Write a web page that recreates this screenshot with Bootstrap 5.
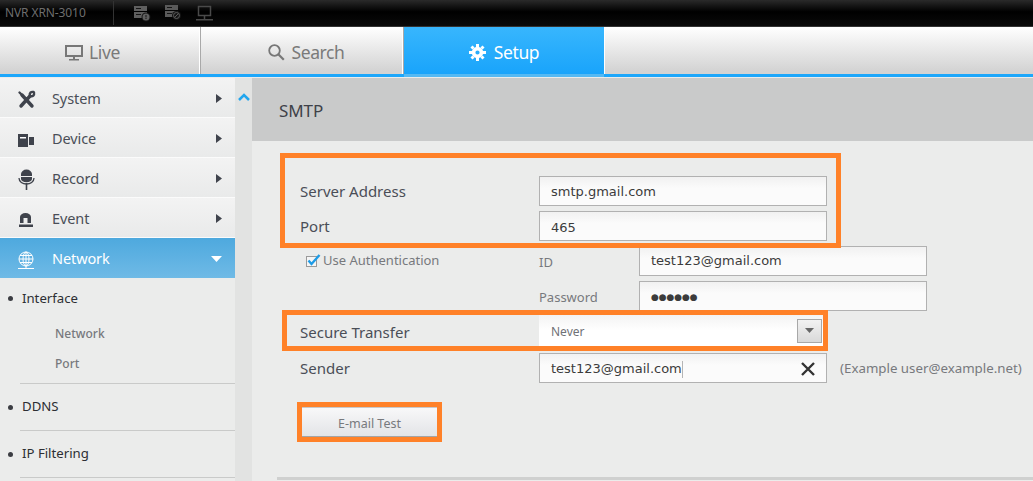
<!DOCTYPE html>
<html lang="en">
<head>
<meta charset="utf-8">
<title>SMTP</title>
<link rel="stylesheet" href="https://cdn.jsdelivr.net/npm/bootstrap@5.3.0/dist/css/bootstrap.min.css">
<style>
html,body{height:100%;overflow:hidden}
body{background:#ebeceb;font-family:"Noto Sans","Open Sans","Liberation Sans",sans-serif;color:#4a4e57}
.topbar{height:27px;background:linear-gradient(#2a2a2a,#000 45%,#0a0a0a);border-bottom:1px solid #333}
.model{width:114px;padding-left:5px;font-size:12px;letter-spacing:-.1px;color:#6e6e6e;line-height:24px;border-right:1px solid #333;height:24px;white-space:nowrap}
.topico{margin-left:20px;gap:14px}
.tabbar{height:50px;background:linear-gradient(#fff,#f8f8f8 15%,#d3d3d3 94%);border-bottom:3px solid #1da7fb}
.tabx{color:#7a7a7a;font-size:17.5px;letter-spacing:-.4px;gap:8px;border-right:1px solid #a9a9a9;box-shadow:inset -1px 0 0 #fff;height:47px;padding-top:4px}
.tlive{width:201px;padding-right:15px;gap:6px}
.tsearch{width:203px;padding-left:8px;gap:7px}
.tsetup{width:201px}
.tabx.act{color:#fff;background:linear-gradient(#38b6fd,#19a4fb);border-right:1px solid #fff;box-shadow:none;position:relative}
.tabx.act::after{content:"";position:absolute;left:0;right:0;bottom:-3px;height:3px;background:#55b9f3}
.mainwrap{margin-top:1px;height:403px}
.sidenav{width:235px;background:#ebeceb}
.mrow{height:40px;padding:2px 13px 0 18px;background:linear-gradient(#f3f3f3,#e9eaea);border-bottom:1px solid #fbfbfb;font-size:14.5px;letter-spacing:-.1px;color:#4a4e57}
.mrow.on{background:linear-gradient(#4ea9de,#6fbae6);color:#fff;border-bottom:0}
.mico{width:18px;height:18px;margin-right:16px;overflow:visible;flex-shrink:0}
.subhead{font-size:13.2px;color:#2d2f33;padding-left:22px;position:relative;height:46px;line-height:45px}
.subhead.firsth{height:40px;line-height:41px}
.subhead::before{content:"";position:absolute;left:8px;top:50%;margin-top:-2.5px;width:5px;height:5px;border-radius:50%;background:#3b3d42}
.subitem{font-size:12px;font-weight:500;color:#77797d;padding-left:55px;height:30px;line-height:32px}
.divl{height:1px;background:#c9cac9;margin-left:20px}
.subend{margin-top:5px}
.scroller{width:17px;background:#e2e3e2;padding-top:15px}
.panel{position:relative}
.panelhead{height:63px;background:#c9caca;padding:2px 0 0 27px;font-size:17px;letter-spacing:-.1px;color:#3e4148}
.fbody{padding:35px 0 0 48px}
.frow{height:30px;margin-bottom:5px}
.flabel{width:239px;font-size:15px;padding-top:0;color:#4a4e57}
.txtin{width:288px;height:30px;border:1px solid #b1b1b1;background:linear-gradient(#f1f1f1,#fbfbfb 40%);font-family:"DejaVu Sans",sans-serif;font-size:13px;color:#3c3c3c;padding:2px 11px 0}
.txtin.flat{padding-top:0}
.txtin.low{padding-top:3px}
.dots{font-size:9px;letter-spacing:-.1px;padding-top:1px}
.slabel{width:100px;font-size:13px;color:#77797d;padding-top:3px}
.authl{width:239px;font-size:13px;color:#77797d;padding:0 0 1px 6px;gap:1px}
.secrow{height:31px;margin-top:-1px;margin-bottom:7px}
.secrow .flabel{padding-top:4px}
.selbox{width:288px;height:31px;background:linear-gradient(#f3f3f3,#fff 50%);padding:0 5px 0 12px;font-size:12px;color:#6f7176}
.seltext{padding-top:3px}
.selbtn{width:25px;height:24px;border:1px solid #a8a8a8;background:linear-gradient(#f2f2f2,#d9d9d9)}
.hint{font-size:13.3px;color:#77797d;margin-left:13px;white-space:nowrap;padding-top:1px}
.caretbar{width:1px;height:17px;background:#b5b5b5}
.testbtn{display:block;width:135px;height:30px;border:0;border-bottom:1px solid #a3a4a6;border-top:1px solid #c8c8c8;border-radius:0;background:linear-gradient(#f8f8f9,#e3e4e7);font-size:12.5px;color:#77797d;margin:24px 0 0 2px;padding:5px 0 0}
.bline{position:absolute;left:25px;right:0;top:399px;height:3px;background:#cfd0cf}
.mark-o{position:absolute;border:5px solid #ff8128;pointer-events:none}
.m1{left:28px;top:75px;width:561px;height:95px}
.m2{left:30px;top:232px;width:546px;height:41px}
.m3{left:45px;top:324px;width:145px;height:40px}
</style>
</head>
<body>
<div class="topbar d-flex align-items-center">
  <div class="model">NVR XRN-3010</div>
  <div class="topico d-flex align-items-center">
    <svg width="17" height="17" viewBox="0 0 17 17"><path fill="#5f5f5f" d="M0 1h13v5H0zM0 7h13v6H0z"/><path fill="#151515" d="M2 3h5v1H2zM2 9h5v1H2z"/><circle cx="12" cy="12" r="4.500" fill="#151515"/><circle cx="12" cy="12" r="3.500" fill="#5f5f5f"/><path fill="#151515" d="M11.500 10h1v2.500h-1zM11.500 13h1v1h-1z"/></svg>
    <svg width="17" height="17" viewBox="0 0 17 17"><path fill="#5a5a5a" d="M0 0h13v5H0zM0 6h13v6H0z"/><path fill="#151515" d="M2 2h5v1H2zM2 8h5v1H2z"/><circle cx="11.500" cy="10.500" r="4.500" fill="#151515"/><circle cx="11.500" cy="10.500" r="3" fill="none" stroke="#5a5a5a"/><path stroke="#5a5a5a" d="M9.500 12.500l4-4"/></svg>
    <svg width="17" height="17" viewBox="0 0 17 17"><path fill="none" stroke="#4a4a4a" stroke-width="1.500" d="M2.500 1.500h12v9h-12zM8.500 11v3"/><path fill="#4a4a4a" d="M0 14h17v1.500H0z"/></svg>
  </div>
</div>
<div class="tabbar d-flex">
  <div class="tabx tlive d-flex align-items-center justify-content-center"><svg width="18" height="16" viewBox="0 0 18 16"><path fill="none" stroke="#777" stroke-width="2" d="M1 1h16v10H1z"/><path fill="#777" d="M8 12h2v2H8zM4 14h10v1.500H4z"/></svg>Live</div>
  <div class="tabx tsearch d-flex align-items-center justify-content-center"><svg width="17" height="17" viewBox="0 0 17 17"><circle cx="6.500" cy="6.500" r="5.300" fill="none" stroke="#777" stroke-width="1.800"/><path stroke="#777" stroke-width="2.200" d="M10.300 10.300l5.500 5.500"/></svg>Search</div>
  <div class="tabx tsetup act d-flex align-items-center justify-content-center"><svg width="17" height="17" viewBox="0 0 17 17"><circle cx="8.500" cy="8.500" r="3.900" fill="none" stroke="#fff" stroke-width="3.600"/><g stroke="#fff" stroke-width="3"><path d="M8.500 0v3M8.500 14v3M0 8.500h3M14 8.500h3M2.500 2.500l2 2M12.500 12.500l2 2M14.500 2.500l-2 2M4.500 12.500l-2 2"/></g></svg>Setup</div>
</div>
<div class="mainwrap d-flex">
  <nav class="sidenav flex-shrink-0">
    <div class="mrow d-flex align-items-center">
      <svg class="mico" viewBox="0 0 18 18"><g fill="none" stroke="#3f434c" stroke-linecap="round"><path stroke-width="3.400" d="M3 16L12 6M4 5l10 11"/><path stroke-width="2.400" d="M1.500 2.500L4 5M12 6c-1-3 1-4.500 3.500-4M12 6c3 1 4.500-1 4-3.500"/></g></svg>
      <span class="flex-grow-1">System</span>
      <svg width="6" height="9" viewBox="0 0 6 9"><path fill="#3f434c" d="M0 0l6 4.500L0 9z"/></svg>
    </div>
    <div class="mrow d-flex align-items-center">
      <svg class="mico" viewBox="0 0 18 18"><path fill="#3f434c" d="M0 4h10v13H0zM11 7h5v8h-5z"/><path fill="#fff" d="M2 7h6v1.500H2z"/></svg>
      <span class="flex-grow-1">Device</span>
      <svg width="6" height="9" viewBox="0 0 6 9"><path fill="#3f434c" d="M0 0l6 4.500L0 9z"/></svg>
    </div>
    <div class="mrow d-flex align-items-center">
      <svg class="mico" viewBox="0 0 18 18"><path fill="#3f434c" d="M3 4a5 4 0 0 1 11 0v2H3zM3 7h11v2a5 3 0 0 1-11 0z"/><path fill="none" stroke="#3f434c" stroke-width="1.300" d="M1 8c0 8 15 8 15 0"/><path stroke="#3f434c" stroke-width="1.600" d="M8.500 13v7"/></svg>
      <span class="flex-grow-1">Record</span>
      <svg width="6" height="9" viewBox="0 0 6 9"><path fill="#3f434c" d="M0 0l6 4.500L0 9z"/></svg>
    </div>
    <div class="mrow d-flex align-items-center">
      <svg class="mico" viewBox="0 0 18 18"><path fill="#3f434c" d="M2 13V7a5.500 4 0 0 1 11 0v6H9.500V8h-4v5zM1 14.500h14V17H1z"/></svg>
      <span class="flex-grow-1">Event</span>
      <svg width="6" height="9" viewBox="0 0 6 9"><path fill="#3f434c" d="M0 0l6 4.500L0 9z"/></svg>
    </div>
    <div class="mrow on d-flex align-items-center">
      <svg class="mico" viewBox="0 0 18 18"><g fill="none" stroke="#fff"><circle cx="8" cy="9" r="7"/><ellipse cx="8" cy="9" rx="3" ry="7"/><path d="M1 9h14M2 5.500h12M2 12.500h12M8 2v17M0 18.500h16"/></g></svg>
      <span class="flex-grow-1">Network</span>
      <svg width="11" height="6" viewBox="0 0 11 6"><path fill="#fff" d="M0 0h11L5.500 6z"/></svg>
    </div>
    <div class="subhead firsth">Interface</div>
    <div class="subitem">Network</div>
    <div class="subitem">Port</div>
    <div class="divl subend"></div>
    <div class="subhead">DDNS</div>
    <div class="divl"></div>
    <div class="subhead">IP Filtering</div>
    <div class="divl"></div>
  </nav>
  <div class="scroller flex-shrink-0 d-flex justify-content-center"><svg width="12" height="8" viewBox="0 0 12 8"><path fill="none" stroke="#22a6ee" stroke-width="2.500" d="M1 7l5-5 5 5"/></svg></div>
  <main class="panel flex-grow-1">
    <div class="panelhead d-flex align-items-center">SMTP</div>
    <form class="fbody" onsubmit="return false">
      <div class="frow d-flex align-items-center"><span class="flabel">Server Address</span><div class="txtin d-flex align-items-center">smtp.gmail.com</div></div>
      <div class="frow d-flex align-items-center"><span class="flabel">Port</span><div class="txtin low d-flex align-items-center">465</div></div>
      <div class="frow d-flex align-items-center">
        <span class="authl d-flex align-items-center"><svg width="16" height="14" viewBox="0 0 16 14"><rect x="0.500" y="2.500" width="10" height="10" fill="#f5f5f5" stroke="#9a9a9a"/><path fill="none" stroke="#1d9be6" stroke-width="2.400" d="M2.500 6.500l3 3.500 8-9"/></svg>Use Authentication</span>
        <span class="slabel">ID</span><div class="txtin flat d-flex align-items-center">test123@gmail.com</div>
      </div>
      <div class="frow d-flex align-items-center">
        <span class="flabel"></span><span class="slabel">Password</span><div class="txtin d-flex align-items-center"><span class="dots">●●●●●●</span></div>
      </div>
      <div class="frow secrow d-flex align-items-center">
        <span class="flabel">Secure Transfer</span>
        <div class="selbox d-flex align-items-center justify-content-between"><span class="seltext">Never</span><span class="selbtn d-flex align-items-center justify-content-center"><svg width="9" height="5" viewBox="0 0 9 5"><path fill="#666" d="M0 0h9L4.500 5z"/></svg></span></div>
      </div>
      <div class="frow d-flex align-items-center">
        <span class="flabel">Sender</span>
        <div class="txtin d-flex align-items-center">test123@gmail.com<span class="caretbar"></span><svg class="ms-auto" width="14" height="14" viewBox="0 0 14 14"><path stroke="#333" stroke-width="2.400" d="M1 1l12 12M13 1L1 13"/></svg></div>
        <span class="hint">(Example user@example.net)</span>
      </div>
      <button class="btn testbtn" type="button">E-mail Test</button>
    </form>
    <div class="bline"></div>
    <div class="mark-o m1"></div>
    <div class="mark-o m2"></div>
    <div class="mark-o m3"></div>
  </main>
</div>
<script src="https://cdn.jsdelivr.net/npm/bootstrap@5.3.0/dist/js/bootstrap.bundle.min.js"></script>
</body>
</html>
